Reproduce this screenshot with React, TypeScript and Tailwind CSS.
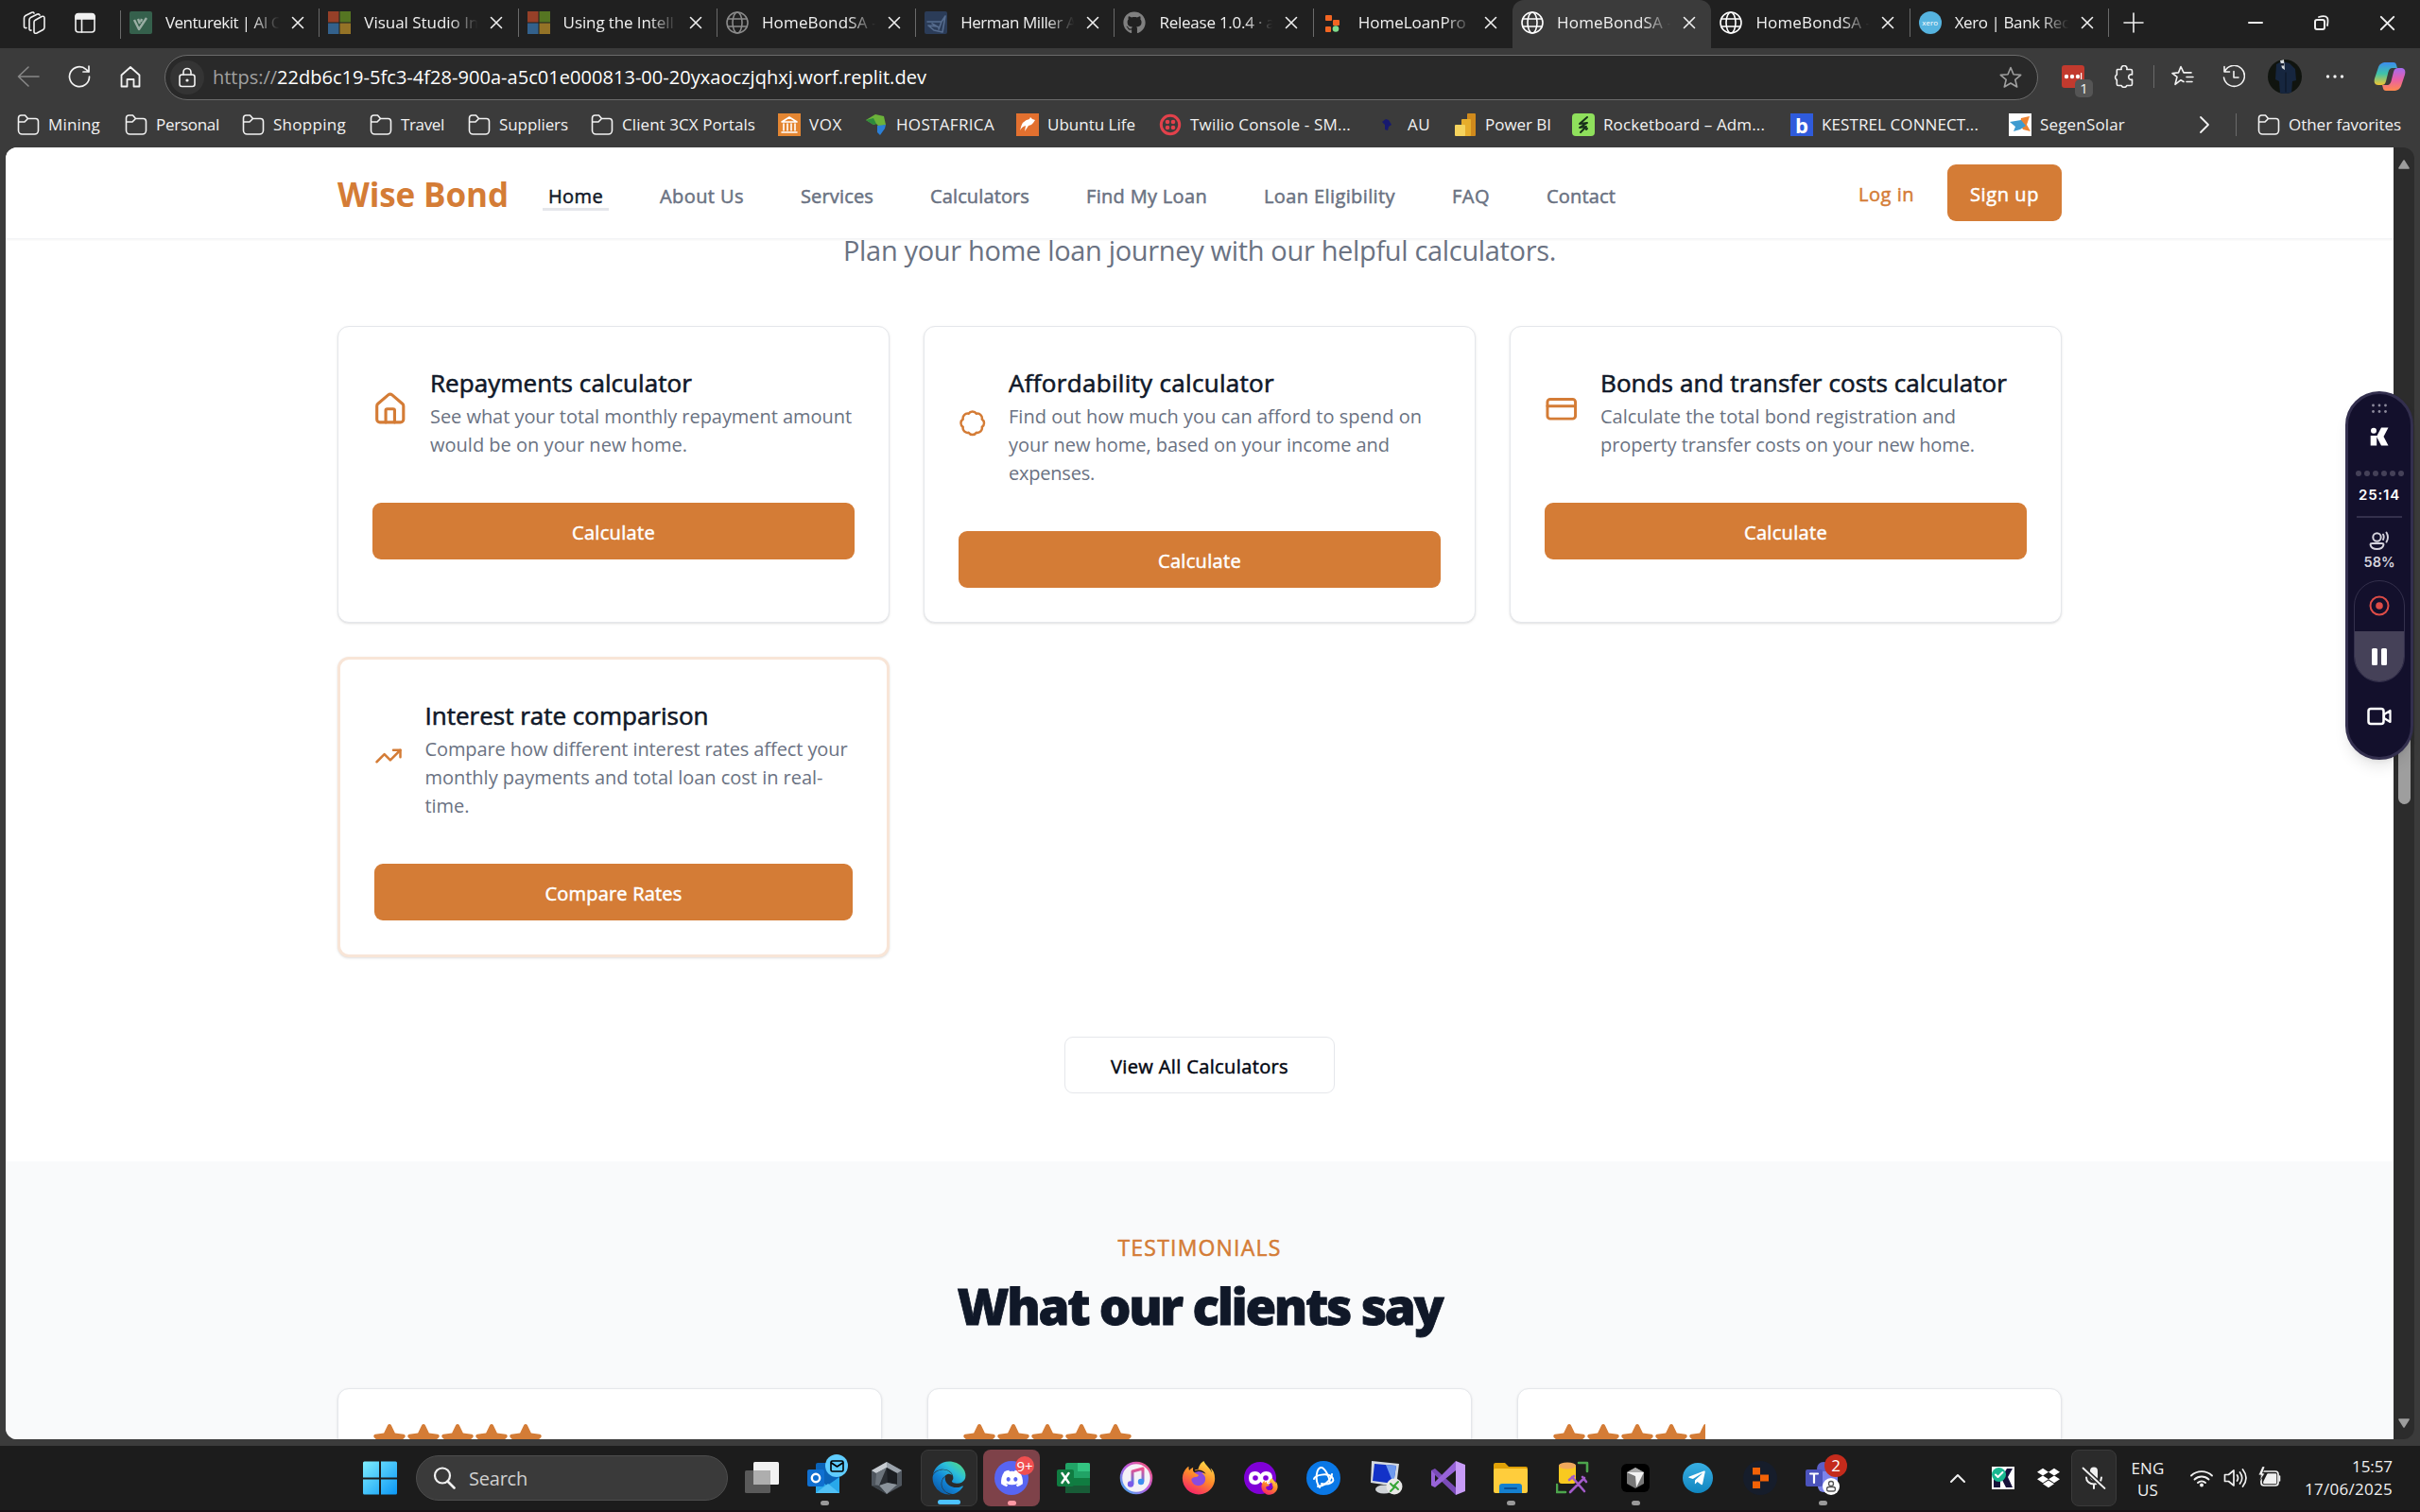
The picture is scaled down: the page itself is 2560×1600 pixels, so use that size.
import React, { useLayoutEffect, useRef, useState } from "react";
import { Badge, CreditCard, House, TrendingUp } from "lucide-react";
import { FaDiscord, FaDropbox, FaEdge, FaFirefoxBrowser, FaGithub, FaStar, FaStarHalf, FaTelegramPlane } from "react-icons/fa";

/** Single line of text tracked so that it spans exactly `w` pixels. */
function Fit({ w, children, className = "" }: { w: number; children: string; className?: string }) {
  const ref = useRef<HTMLSpanElement>(null);
  const [ls, setLs] = useState(0);
  useLayoutEffect(() => {
    const el = ref.current;
    if (!el) return;
    el.style.letterSpacing = "0px";
    const natural = el.getBoundingClientRect().width;
    setLs((w - natural) / children.length);
    el.style.letterSpacing = `${(w - natural) / children.length}px`;
  }, [w, children]);
  return (
    <span ref={ref} className={"inline-block whitespace-nowrap " + className} style={{ letterSpacing: `${ls}px` }}>
      {children}
    </span>
  );
}

type SvgProps = { size?: number; vb?: string; className?: string; children: React.ReactNode };
function Svg({ size = 24, vb = "0 0 24 24", className = "", children }: SvgProps) {
  return (
    <svg width={size} height={size} viewBox={vb} fill="none" stroke="currentColor" strokeWidth="1.6" strokeLinecap="round" strokeLinejoin="round" className={"shrink-0 " + className}>
      {children}
    </svg>
  );
}

/* ---------- browser chrome ---------- */

const Globe = ({ className = "" }) => (
  <Svg className={className}>
    <circle cx="12" cy="12" r="11" />
    <ellipse cx="12" cy="12" rx="5" ry="11" />
    <path d="M2 8h20M2 16h20" />
  </Svg>
);
const MsLogo = () => (
  <Svg>
    <g stroke="none">
      <path fill="#964028" d="M0 0h11.500v11.500H0z" />
      <path fill="#557522" d="M12.500 0H24v11.500H12.500z" />
      <path fill="#33618c" d="M0 12.500h11.500V24H0z" />
      <path fill="#947327" d="M12.500 12.500H24V24H12.500z" />
    </g>
  </Svg>
);

const tabs: { t: string; w: number; icon: React.ReactNode; active?: boolean; noSep?: boolean }[] = [
  {
    t: "Venturekit | AI C", w: 122,
    icon: <Svg><rect width="24" height="24" rx="2" fill="#35604c" stroke="none" /><path d="M5 9l5 10 8-12M9 8l2 5M13 8l-1 3" stroke="#9aaea4" strokeWidth="2.4" strokeLinecap="butt" /></Svg>,
  },
  { t: "Visual Studio In", w: 121, icon: <MsLogo /> },
  { t: "Using the Intell", w: 117, icon: <MsLogo /> },
  { t: "HomeBondSA -", w: 122, icon: <Globe className="text-[#8a8a8a]" /> },
  {
    t: "Herman Miller A", w: 122,
    icon: <Svg><rect width="24" height="24" rx="2" fill="#2b3c58" stroke="none" /><path d="M3 11h15l4-6-3 17-9-2-6-5 9 1M8 13l7 4M18 11l-3 8" stroke="#566c8e" /></Svg>,
  },
  { t: "Release 1.0.4 · a", w: 122, icon: <FaGithub className="size-6 shrink-0 text-[#808080]" /> },
  {
    t: "HomeLoanPro", w: 114,
    icon: <Svg><g stroke="none"><rect x="3" y="4" width="7" height="6" rx="1" fill="#f26522" /><rect x="11" y="9" width="7" height="6" rx="1" fill="#f26522" /><rect x="3" y="16" width="6" height="6" rx="1" fill="#f26522" /><circle cx="14" cy="18.500" r="3.300" fill="#7fdc8c" /></g></Svg>,
    noSep: true,
  },
  { t: "HomeBondSA -", w: 122, icon: <Globe className="text-white" />, active: true, noSep: true },
  { t: "HomeBondSA -", w: 122, icon: <Globe className="text-white" /> },
  {
    t: "Xero | Bank Rec", w: 121,
    icon: <span className="flex size-6 shrink-0 items-center justify-center rounded-full bg-[#56b4e0] text-[8px] text-white">xero</span>,
  },
];

function CloseX({ size = 14 }: { size?: number }) {
  return <Svg size={size} vb="0 0 14 14"><path d="M1.500 1.500l11 11M12.500 1.500l-11 11" /></Svg>;
}

function TabBar() {
  return (
    <div className="flex h-[51px] bg-[#202020] text-[17px] text-[#f0f0f0]">
      <div className="flex w-[127px] shrink-0 items-center gap-[30px] pl-6 pb-[3px]">
        <Svg>
          <path d="M12 11.500q0-1.500 1-2l7-4q3-1 3 1.500v10q0 1.500-1.500 2.500l-6.500 3.500q-3 1-3-1.500z" />
          <path d="M9 20q-2 .5-2-1.500V9q0-1.500 1.500-2.500l7-3.500q2-.5 2.500 1" />
          <path d="M4 17.500q-2.500.5-2.500-1.500V7q0-1.500 1.500-2.500l6.500-3.300q2-.7 2.500.8" />
        </Svg>
        <Svg><rect x="2" y="3" width="20" height="19" rx="3" /><path d="M2 5.500a3 3 0 0 1 3-3h14a3 3 0 0 1 3 3V8H2z" fill="currentColor" /><path d="M8.500 8v14" /></Svg>
      </div>
      <div className="h-[30px] w-px self-center bg-[#6a6a6a]" />
      <div className="flex items-center">
        {tabs.map((tab, i) => (
          <div
            key={i}
            className={
              "flex h-[51px] w-[210.300px] items-center pb-[3px] pl-[9px] " +
              (tab.active ? "rounded-t-xl bg-[#3b3b3b]" : "")
            }
          >
            {tab.icon}
            <div className="ml-[14px] w-[123px] overflow-hidden [mask-image:linear-gradient(to_right,#000_74%,transparent_98%)]">
              <Fit w={tab.w}>{tab.t}</Fit>
            </div>
            <div className="ml-[9px] flex w-4 justify-center"><CloseX /></div>
            {!tab.noSep && <div className="ml-auto h-[30px] w-px bg-[#6a6a6a]" />}
          </div>
        ))}
      </div>
      <div className="flex flex-1 items-center pb-[3px] pl-[13px] pr-[26px]">
        <Svg size={26} vb="0 0 26 26"><path d="M3 13h20M13 3v20" /></Svg>
        <div className="ml-auto flex items-center">
          <Svg size={16} vb="0 0 16 16"><path d="M1 8h14" strokeWidth="2" /></Svg>
          <Svg size={16} vb="0 0 16 16" className="ml-[54px]"><rect x="1" y="5" width="10" height="10" rx="2" strokeWidth="2" /><path d="M5 2q7-2 9 1 1 2 0 8" strokeWidth="1.800" /></Svg>
          <div className="ml-[53px]"><CloseX size={17} /></div>
        </div>
      </div>
    </div>
  );
}

function Toolbar() {
  return (
    <div className="flex h-[59px] items-center bg-[#3b3b3b] text-[#f2f2f2]">
      <div className="flex w-[174px] shrink-0 items-center gap-[30px] pl-[18px]">
        <Svg className="text-[#888]"><path d="M23 12H1.500M12 2L1.500 12 12 22" /></Svg>
        <Svg><path d="M22.500 12A10.500 10.500 0 1 1 19 4.300L22 7M22 1v6h-6" strokeWidth="1.700" /></Svg>
        <Svg><path d="M2.500 10.500L12 2l9.500 8.500V22.500h-6V15h-7v7.500h-6z" strokeWidth="1.800" /></Svg>
      </div>
      <div className="mt-[2px] flex h-12 w-[1982px] shrink-0 items-center rounded-full border-[1.500px] border-[#6b6b6b] bg-[#292929] pl-[5px] pr-4">
        <span className="flex size-9 items-center justify-center rounded-full bg-[#343434]">
          <Svg size={22} vb="0 0 22 22"><rect x="3" y="8" width="16" height="12.500" rx="2.500" /><path d="M7 8V5.500a4 4 0 0 1 8 0V8" /><circle cx="11" cy="14" r=".8" fill="currentColor" /></Svg>
        </span>
        <div className="ml-[9px] text-[20px] leading-none">
          <Fit w={68} className="text-[#a0a0a0]">https://</Fit>
          <Fit w={687} className="text-white">22db6c19-5fc3-4f28-900a-a5c01e000813-00-20yxaoczjqhxj.worf.replit.dev</Fit>
        </div>
        <Svg className="ml-auto text-[#a0a0a0]"><path d="M12 1.500l3 7.200 7.700.6-5.900 5 1.900 7.700L12 18l-6.700 4 1.900-7.700-5.900-5 7.700-.6z" /></Svg>
      </div>
      <div className="relative ml-[25px] flex h-6 w-6 items-center justify-center rounded-[3px] bg-[#c23a2e]">
        <Svg size={22} vb="0 0 22 22" className="text-white"><g fill="currentColor" stroke="none"><circle cx="4" cy="11" r="2.200" /><circle cx="10" cy="11" r="2.200" /><circle cx="16" cy="11" r="2.200" /><path d="M19 7h1.200v8H19z" /></g></Svg>
        <span className="absolute left-[14px] top-[15px] flex h-[19px] w-[19px] items-center justify-center rounded-[5px] bg-[#555] text-[15px]">1</span>
      </div>
      <Svg className="ml-[30px]"><path d="M5 4.500h4.200a3 3 0 1 1 5.600 0H19a1.500 1.500 0 0 1 1.500 1.500v4a2.800 2.800 0 1 0 0 5.200V20a1.500 1.500 0 0 1-1.500 1.500h-4.200a3 3 0 0 1-5.600 0H5.800A1.500 1.500 0 0 1 4.300 20v-4.500a3 3 0 0 1 0-5.400V6A1.500 1.500 0 0 1 5 4.500z" /></Svg>
      <div className="ml-[19px] h-6 w-px bg-[#6a6a6a]" />
      <Svg className="ml-[18px]"><path d="M13 17.500l-3-1.800-6 4.600 2-8L1 8.500l6.500-.6L10 1.500l3 6.400h8M16 12.500h7M16 17.500h6" /></Svg>
      <Svg className="ml-[30px]"><path d="M2.500 6.500A11 11 0 1 1 1.500 13M2 1.500v5.500h5.500M12 6.500v6.500h5" /></Svg>
      <span className="ml-6 flex size-9 shrink-0 overflow-hidden rounded-full">
        <Svg size={36} vb="0 0 36 36"><g stroke="none"><rect width="36" height="36" fill="#10140f" /><path d="M9 5l6-3 8 2 6 6 1 12-4 1-1 13H13l-1-13-4-2z" fill="#16263f" /><path d="M13 1l4-1 1 11-3-2z" fill="#d4d9dc" /><path d="M13.500 4h3.500v2.500h-3.500z" fill="#1b2233" /><path d="M19 14v20" stroke="#0a1220" strokeWidth="1" /></g></Svg>
      </span>
      <Svg size={20} vb="0 0 20 20" className="ml-[25px]"><g fill="currentColor" stroke="none"><circle cx="2.500" cy="10" r="1.700" /><circle cx="10" cy="10" r="1.700" /><circle cx="17.500" cy="10" r="1.700" /></g></Svg>
      <Svg size={34} vb="0 0 34 34" className="ml-[31px]">
        <g stroke="none">
          <path d="M13 2h8c3 0 3 3 4 6h-5c-3 0-4 2-5 6l-2 8c-1 3-2 4-5 4H5c-4 0-5-3-4-7l4-12c1-3 4-5 8-5z" fill="url(#cp1)" />
          <path d="M21 32h-8c-3 0-3-3-4-6h5c3 0 4-2 5-6l2-8c1-3 2-4 5-4h3c4 0 5 3 4 7l-4 12c-1 3-4 5-8 5z" fill="url(#cp2)" />
        </g>
      </Svg>
    </div>
  );
}

const Folder = () => (
  <Svg><path d="M1.500 5a3 3 0 0 1 3-3h4l3 3.500h8a3 3 0 0 1 3 3V18a4 4 0 0 1-4 4h-13a4 4 0 0 1-4-4zM1.500 9H8l3.500-3.500" /></Svg>
);
const f = <Folder />;
const bookmarks: { t: string; slot: number; w: number; icon: React.ReactNode }[] = [
  { t: "Mining", slot: 114, w: 55, icon: f },
  { t: "Personal", slot: 124, w: 67, icon: f },
  { t: "Shopping", slot: 135, w: 77, icon: f },
  { t: "Travel", slot: 104, w: 46, icon: f },
  { t: "Suppliers", slot: 130, w: 73, icon: f },
  { t: "Client 3CX Portals", slot: 198, w: 141, icon: f },
  { t: "VOX", slot: 92, w: 35, icon: <Svg><rect width="24" height="24" fill="#e48632" stroke="none" /><path d="M4 9l8-5 8 5zM6 11v7M10 11v7M14 11v7M18 11v7M4 20h16" stroke="#fff" /></Svg> },
  { t: "HOSTAFRICA", slot: 160, w: 104, icon: <Svg><g stroke="none"><path d="M1 7L11 1l9 2 2 9-7 2-3-3-3 1z" fill="#6cb33a" /><path d="M13 13l9-1-1 4-5 7-3-3z" fill="#2b7fd6" /><path d="M1 7l8-2 3 6-3 1z" fill="#2f8a3c" /></g></Svg> },
  { t: "Ubuntu Life", slot: 151, w: 93, icon: <Svg><rect width="24" height="24" fill="#e2702f" stroke="none" /><path d="M4 18q2-11 10-12l1-2 2 2 3 1-2 3q-2 3-5 3l-4 6 1-6q-4 1-6 5z" fill="#fff" stroke="none" /></Svg> },
  { t: "Twilio Console - SM...", slot: 230, w: 170, icon: <Svg><circle cx="12" cy="12" r="9.700" stroke="#e2414b" strokeWidth="3" /><g fill="#e2414b" stroke="none"><circle cx="9" cy="9" r="2.300" /><circle cx="15" cy="9" r="2.300" /><circle cx="9" cy="15" r="2.300" /><circle cx="15" cy="15" r="2.300" /></g></Svg> },
  { t: "AU", slot: 82, w: 24, icon: <Svg><path d="M6 9l4-3 3 1 3 5-3 2-1 4-3-1 0-5z" fill="#17196f" stroke="none" /></Svg> },
  { t: "Power BI", slot: 125, w: 70, icon: <Svg><g stroke="none"><rect x="14" y="0" width="9" height="24" rx="1" fill="#d08a1c" /><rect x="8" y="6" width="10" height="18" rx="1" fill="#e6ad2c" /><rect x="1" y="12" width="11" height="12" rx="1" fill="#f5d35d" /></g></Svg> },
  { t: "Rocketboard – Adm...", slot: 231, w: 171, icon: <Svg><rect width="24" height="24" rx="4" fill="#8fe05c" stroke="none" /><path d="M16 4L8 11l8-1-8 5 7-1-6 6M15 17l1-1" stroke="#17301a" strokeWidth="2" /></Svg> },
  { t: "KESTREL CONNECT...", slot: 231, w: 166, icon: <span className="flex size-6 shrink-0 items-center justify-center bg-[#2f5bdc] text-[22px] font-bold leading-none text-white">b</span> },
  { t: "SegenSolar", slot: 200, w: 90, icon: <Svg><g stroke="none"><rect width="24" height="24" fill="#fff" /><path d="M13 5l9-2-3 9 4 7-8-2-3-6z" fill="#ee8331" /><path d="M1 9l12-2 5 6-6 4-7 2 2-5z" fill="#3e9bd0" /></g></Svg> },
];

function BookmarkBar() {
  return (
    <div className="flex h-[46px] items-center bg-[#3b3b3b] pb-0.5 pl-[18px] text-[17px] text-[#f2f2f2]">
      {bookmarks.map((b) => (
        <div key={b.t} className="flex shrink-0 items-center gap-[9px]" style={{ width: b.slot }}>
          {b.icon}
          <Fit w={b.w}>{b.t}</Fit>
        </div>
      ))}
      <Svg size={20} vb="0 0 20 20"><path d="M3 2l8 8-8 8" strokeWidth="1.800" /></Svg>
      <div className="ml-[20px] h-6 w-px bg-[#6a6a6a]" />
      <div className="ml-[22px] flex items-center gap-[9px]">
        <Folder />
        <Fit w={119}>Other favorites</Fit>
      </div>
    </div>
  );
}

/* ---------- web page ---------- */

const navLinks: [string, number][] = [
  ["Home", 58], ["About Us", 89], ["Services", 77], ["Calculators", 105],
  ["Find My Loan", 128], ["Loan Eligibility", 139], ["FAQ", 40], ["Contact", 73],
];

function SiteHeader() {
  return (
    <header className="relative z-10 flex h-[97px] items-center border-b border-gray-100 bg-white px-[351px] shadow-xs">
      <Fit w={181} className="pt-[3px] text-[35px] font-bold leading-[48px] text-[#d47c36]">Wise Bond</Fit>
      <nav className="ml-[36px] flex gap-12 pt-[3px]">
        {navLinks.map(([t, w], i) => (
          <a
            key={t}
            className={
              "border-b-[3px] px-1.5 pt-[6px] text-[20px] leading-[25px] [-webkit-text-stroke:0.5px] " +
              (i === 0 ? "border-gray-200 text-gray-900" : "border-transparent text-gray-500")
            }
          >
            <Fit w={w}>{t}</Fit>
          </a>
        ))}
      </nav>
      <Fit w={59} className="ml-auto pt-[3px] text-[20px] text-[#d47c36] [-webkit-text-stroke:0.5px]">Log in</Fit>
      <button className="ml-[35px] flex h-[60px] w-[121px] items-center justify-center rounded-[9px] bg-[#d47c36] pt-[3px] text-[20px] text-white [-webkit-text-stroke:0.5px]">
        <Fit w={73}>Sign up</Fit>
      </button>
    </header>
  );
}

type Calc = { title: string; tw: number; lines: [string, number][]; cta: string; cw: number; icon: React.ReactNode; featured?: boolean };
const calcs: Calc[] = [
  {
    title: "Repayments calculator", tw: 277, cta: "Calculate", cw: 88,
    lines: [["See what your total monthly repayment amount", 446], ["would be on your new home.", 272]],
    icon: <House className="mb-[2px] h-[37.500px] w-[37.500px] shrink-0" />,
  },
  {
    title: "Affordability calculator", tw: 281, cta: "Calculate", cw: 88,
    lines: [["Find out how much you can afford to spend on", 437], ["your new home, based on your income and", 403], ["expenses.", 91]],
    icon: <Badge className="mb-[2px] h-[29.500px] w-[29.500px] shrink-0" />,
  },
  {
    title: "Bonds and transfer costs calculator", tw: 430, cta: "Calculate", cw: 88,
    lines: [["Calculate the total bond registration and", 376], ["property transfer costs on your new home.", 396]],
    icon: <CreditCard className="mb-[2px] h-[35.500px] w-[35.500px] shrink-0" />,
  },
  {
    title: "Interest rate comparison", tw: 300, cta: "Compare Rates", cw: 145, featured: true,
    lines: [["Compare how different interest rates affect your", 447], ["monthly payments and total loan cost in real-", 421], ["time.", 47]],
    icon: <TrendingUp className="mb-[2px] h-[30px] w-[30px] shrink-0" />,
  },
];

function CalcCard({ c }: { c: Calc }) {
  return (
    <div className={"rounded-xl bg-white p-9 shadow-sm " + (c.featured ? "border-[3px] border-[#f8e5d7]" : "border border-gray-200")}>
      <div className="flex items-center gap-[23.500px] text-[#d47c36]">
        {c.icon}
        <div>
          <h3 className="h-[43px] text-[26px] leading-[46px] text-gray-900 [-webkit-text-stroke:0.6px]"><Fit w={c.tw}>{c.title}</Fit></h3>
          {c.lines.map(([t, w]) => (
            <p key={t} className="h-[30px] text-[20px] leading-[32px] text-gray-500"><Fit w={w}>{t}</Fit></p>
          ))}
        </div>
      </div>
      <button className="mt-[47px] flex h-[60px] w-full items-center justify-center rounded-[9px] bg-[#d47c36] pt-[3px] text-[20px] text-white [-webkit-text-stroke:0.5px]">
        <Fit w={c.cw}>{c.cta}</Fit>
      </button>
    </div>
  );
}

function Stars({ half = false }) {
  return (
    <div className="flex text-[#d47c36]">
      {[0, 1, 2, 3].map((i) => <FaStar key={i} className="h-8 w-9" />)}
      {half ? <FaStarHalf className="h-8 w-9" /> : <FaStar className="h-8 w-9" />}
    </div>
  );
}

function SitePage() {
  return (
    <div className="h-[1367px] w-[2526px] overflow-hidden rounded-tl-xl rounded-bl-xl bg-white">
      <SiteHeader />
      <section className="flex flex-col items-center px-[351px] pb-[72px]">
        <Fit w={754} className="-mt-[9px] text-[29px] leading-[42px] text-gray-500">Plan your home loan journey with our helpful calculators.</Fit>
        <div className="mt-[59px] grid w-full grid-cols-3 gap-9">
          {calcs.map((c) => <CalcCard key={c.title} c={c} />)}
        </div>
        <button className="mt-[84px] flex h-[60px] w-[286px] items-center justify-center rounded-[9px] border border-gray-200 pt-[3px] text-[20px] text-gray-950 [-webkit-text-stroke:0.5px]">
          <Fit w={188}>View All Calculators</Fit>
        </button>
      </section>
      <section className="flex flex-col items-center bg-gray-50 px-[351px] pb-20 pt-[73px]">
        <Fit w={173} className="text-[23px] leading-[36px] text-[#d47c36] [-webkit-text-stroke:0.5px]">TESTIMONIALS</Fit>
        <h2 className="mt-[14px] text-[53px] font-extrabold leading-[60px] text-gray-900 [-webkit-text-stroke:0.8px]"><Fit w={513}>What our clients say</Fit></h2>
        <div className="mt-[57px] grid w-full grid-cols-3 gap-12">
          {[false, false, true].map((half, i) => (
            <div key={i} className="h-[300px] rounded-xl border border-gray-200 bg-white px-9 pt-[37px] shadow-sm"><Stars half={half} /></div>
          ))}
        </div>
      </section>
    </div>
  );
}

function Scrollbar() {
  return (
    <div className="flex w-[22px] flex-col items-center rounded-r-xl bg-[#2c2c2c]">
      <Svg size={14} vb="0 0 14 14" className="mt-[11px]"><path d="M2 11l5-8 5 8z" fill="#9e9e9e" stroke="#9e9e9e" /></Svg>
      <div className="mt-[579px] h-[91px] w-[13px] rounded-full bg-[#9e9e9e]" />
      <Svg size={14} vb="0 0 14 14" className="mb-[10px] mt-auto"><path d="M2 3l5 8 5-8z" fill="#9e9e9e" stroke="#9e9e9e" /></Svg>
    </div>
  );
}

/* ---------- floating recorder ---------- */

function Recorder() {
  return (
    <div className="absolute left-[2481px] top-[414px] flex h-[390px] w-[72px] flex-col items-center rounded-full border-[3px] border-[#332f4e] bg-[#13102c] font-['Inter',sans-serif] text-white shadow-lg">
      <Svg size={20} vb="0 0 20 20" className="mt-[6px]">
        <g fill="#8b899b" stroke="none">
          <circle cx="3.500" cy="6" r="1.400" /><circle cx="10" cy="6" r="1.400" /><circle cx="16.500" cy="6" r="1.400" />
          <circle cx="3.500" cy="12.500" r="1.400" /><circle cx="10" cy="12.500" r="1.400" /><circle cx="16.500" cy="12.500" r="1.400" />
        </g>
      </Svg>
      <Svg size={20} vb="0 0 20 20" className="mt-[9px]"><g fill="#fff" stroke="none"><circle cx="4" cy="3.800" r="3" /><path d="M.7 9h6.500v10.500H.7zM12 .5h7.500L14.500 10l5 9.500H12L7 10z" /></g></Svg>
      <div className="mt-[26px] flex gap-[3px]">
        {[0, 1, 2, 3, 4, 5].map((i) => <span key={i} className="size-1.5 rounded-full bg-[#454158]" />)}
      </div>
      <Fit w={44} className="mt-[11px] text-[15px] font-semibold leading-[18px]">25:14</Fit>
      <div className="mt-[12.500px] h-[2px] w-12 bg-[#34304c]" />
      <Svg size={22} vb="0 0 22 22" className="mt-[13px] text-[#d5d3dd]"><circle cx="8.500" cy="7.500" r="4.200" strokeWidth="2" /><path d="M1.500 15.500q0-1.500 2-1.500h10q2 0 2 1.500-1 4.500-7 4.500t-7-4.500zM15 4.500q1.500 2.500 0 5.500M18.500 2.500q3 5 0 10" strokeWidth="1.900" /></Svg>
      <Fit w={33} className="mt-[3px] text-[14.500px] font-semibold leading-[18px] text-[#d5d3dd]">58%</Fit>
      <div className="mt-[10px] h-[108px] w-[54px] overflow-hidden rounded-full border border-[#34304c]">
        <div className="flex h-[53px] items-center justify-center text-[#dd4c47]">
          <Svg size={22} vb="0 0 22 22"><circle cx="11" cy="11" r="9.500" strokeWidth="2" /><circle cx="11" cy="11" r="3.800" fill="currentColor" stroke="none" /></Svg>
        </div>
        <div className="flex h-[55px] items-center justify-center gap-1 bg-[#454158]">
          <span className="h-[18px] w-1.5 rounded-[1.500px] bg-white" /><span className="h-[18px] w-1.5 rounded-[1.500px] bg-white" />
        </div>
      </div>
      <Svg size={26} vb="0 0 26 26" className="mt-[23px]"><rect x="1.500" y="5" width="16" height="16" rx="2.500" strokeWidth="2.500" /><path d="M18 11l6.500-4v12L18 15z" strokeWidth="2.200" /></Svg>
    </div>
  );
}

/* ---------- taskbar ---------- */

function Cell({ children, dot, className = "" }: { children: React.ReactNode; dot?: string; className?: string }) {
  return (
    <div className={"relative flex h-[60px] w-[60px] shrink-0 items-center justify-center rounded-lg " + className}>
      {children}
      {dot && <span className={"absolute bottom-[1px] h-[5px] rounded-full " + dot} />}
    </div>
  );
}
const grayDot = "w-[9px] bg-[#9a9a9a]";
const T = ({ children }: { children: React.ReactNode }) => <Svg size={36} vb="0 0 36 36"><g stroke="none">{children}</g></Svg>;

function TaskIcons() {
  return (
    <>
      <Cell><T><rect x="0" y="10" width="27" height="24" rx="1.500" fill="#5a5a5a" /><rect x="9" y="1" width="27" height="24" rx="1.500" fill="#f2f2f2" /><rect x="9" y="10" width="18" height="15" fill="#aeaeae" /></T></Cell>
      <Cell dot={grayDot}>
        <T><rect x="9" y="2" width="25" height="32" rx="2" fill="#0a63b8" /><path d="M9 18l12 8 13-9v17H9z" fill="#28a8ea" /><path d="M9 34l13-10 12 10z" fill="#50c0f5" /><rect x="0" y="9" width="18" height="18" rx="2" fill="#0f6fd0" /><circle cx="9" cy="18" r="4.200" fill="none" stroke="#fff" strokeWidth="2.400" /></T>
        <span className="absolute left-[31px] top-[5px] flex size-6 items-center justify-center rounded-full bg-[#60cdff] text-black"><Svg size={15} vb="0 0 15 15"><rect x="1" y="2" width="13" height="11" rx="1.500" /><path d="M1.500 4L7.500 8l6-4" /></Svg></span>
      </Cell>
      <Cell><T><path d="M18 1l16 9v16l-16 9-16-9V10z" fill="#4f565e" /><path d="M18 1l16 9-5 3-11-6z" fill="#9ca4ac" /><path d="M18 1v6L7 13l-5-3z" fill="#c7ccd1" /><path d="M18 7l11 6v12l-11-2z" fill="#1b1e22" /><path d="M18 7L7 13l-1 12 4 1z" fill="#6b737b" /><path d="M18 7l-8 19 9-3z" fill="#2a2e33" /><path d="M10 26l9-3 10 2-11 10z" fill="#8b939b" /><path d="M2 26l8 0 8 9z" fill="#3c4248" /></T></Cell>
      <Cell className="border border-[#3a3a3a] bg-[#2b2b2b]" dot="w-6 bg-[#4cc2ff]"><FaEdge className="size-9" fill="url(#edge)" /></Cell>
      <Cell className="bg-[#7e4249]" dot="w-[9px] bg-[#ff99a4]">
        <span className="flex size-9 items-center justify-center rounded-full bg-[#5865f2]"><FaDiscord className="size-[25px] text-white" /></span>
        <span className="absolute left-[34px] top-[7px] flex size-5 items-center justify-center rounded-full bg-[#f04f50] text-[15px] text-white"><Fit w={17}>9+</Fit></span>
      </Cell>
      <Cell><T><rect x="9" y="2" width="26" height="32" rx="2" fill="#21a366" /><path d="M22 2h11a2 2 0 0 1 2 2v7H22z" fill="#33c481" /><path d="M9 18h26v14a2 2 0 0 1-2 2H11a2 2 0 0 1-2-2z" fill="#107c41" /><path d="M9 26h26v6a2 2 0 0 1-2 2H11a2 2 0 0 1-2-2z" fill="#185c37" /><rect x="0" y="9" width="18" height="18" rx="2" fill="#107c41" /><path d="M5.500 13l7 10M12.500 13l-7 10" stroke="#fff" strokeWidth="2.400" /></T></Cell>
      <Cell><T><circle cx="18" cy="18" r="16" fill="#f4f2f7" stroke="url(#tunes)" strokeWidth="2.500" /><path d="M14 24V11l11-3v13" fill="none" stroke="url(#note)" strokeWidth="3" /><circle cx="12" cy="24.500" r="3.200" fill="#7a5be8" /><circle cx="23" cy="22" r="3.200" fill="#3c8ff0" /></T></Cell>
      <Cell><span className="relative flex"><span className="absolute left-[9px] top-[11px] size-[18px] rounded-full bg-[#8a4be0]" /><FaFirefoxBrowser className="relative size-9" fill="url(#fox)" /></span></Cell>
      <Cell>
        <T><circle cx="17" cy="18" r="17" fill="#8000d7" /><path d="M5 18q0-7 6.500-7 4 0 6 3 2-3 6-3 6.500 0 6.500 7t-6.500 7q-4 0-6-3-2 3-6 3Q5 25 5 18z" fill="#fff" /><circle cx="12" cy="18" r="2.800" fill="#8000d7" /><circle cx="23" cy="18" r="2.800" fill="#8000d7" /></T>
        <FaFirefoxBrowser className="absolute left-[30px] top-[30px] size-[18px]" fill="url(#fox)" />
      </Cell>
      <Cell><T><circle cx="18" cy="18" r="18" fill="#0a78e6" /><g fill="none" stroke="#fff" strokeWidth="2"><path d="M14 28C8 20 11 8 15 7s9 9 10 16" /><path d="M8 19c1-4 14-7 19-2s-4 9-11 7" /><path d="M27 14c-1 7-9 13-15 13" /></g></T></Cell>
      <Cell><T><path d="M3 0l29 3-3 24-27-4z" fill="#d5dae0" /><path d="M6 3l23 2-3 19-22-3z" fill="#1232c8" /><path d="M18 4l11 1-3 19z" fill="#6f9bf0" /><ellipse cx="16" cy="30" rx="9" ry="4.500" fill="#cfd3d7" /><circle cx="27" cy="27" r="8.500" fill="#e8e8e6" /><path d="M23 24l4 4-4 4M31 22l-4 4 4 4" fill="none" stroke="#36a536" strokeWidth="2" /></T></Cell>
      <Cell><T><path d="M26 0l10 4v28l-10 4z" fill="#c79bf7" /><path d="M0 10l4-2L26 28v8L3 14v10l-3 2z" fill="#7a4bb8" /><path d="M0 26V10l4 4v14zM26 0v10L4 28l-4-2z" fill="#9763d8" /></T></Cell>
      <Cell dot={grayDot}><T><path d="M0 4a2 2 0 0 1 2-2h10l4 4h18a2 2 0 0 1 2 2v6H0z" fill="#e0a107" /><rect x="0" y="8" width="36" height="26" rx="2" fill="#ffcd3c" /><path d="M6 34v-7a3 3 0 0 1 3-3h18a3 3 0 0 1 3 3v7z" fill="#1580d0" /><rect x="11" y="28" width="14" height="2" rx="1" fill="#0b4f94" /></T></Cell>
      <Cell><T><rect x="3" y="3" width="18" height="21" rx="3" fill="#f9c920" /><ellipse cx="12" cy="5" rx="9" ry="3.500" fill="#f0a85c" /><path d="M24 2h9v9M1 25v8h9" fill="none" stroke="#4ca54c" strokeWidth="2.600" /><path d="M15 33l15-15M17 17l13 15M14 20l5-4M28 17l4 5" stroke="#a25bc9" strokeWidth="2.600" fill="none" /></T></Cell>
      <Cell dot={grayDot}><T><rect x="3" y="3" width="30" height="30" rx="6" fill="#000" /><path d="M18 7l9 5v12l-9 5-9-5V12z" fill="#777" /><path d="M9 12l9-5 9 5-9 4z" fill="#aaa" /><path d="M9 12l18 0-8 16-1-12z" fill="#f2f2f2" /></T></Cell>
      <Cell><span className="flex size-8 items-center justify-center rounded-full bg-linear-to-b from-[#37aee2] to-[#0f86c0]"><FaTelegramPlane className="mr-0.5 size-[20px] text-white" /></span></Cell>
      <Cell><T><circle cx="18" cy="18" r="18" fill="#161d2b" /><path d="M10 7h8v7.500h-8zM18 14.500h9v7h-9zM10 21.500h8V29h-8z" fill="#f26207" /></T></Cell>
      <Cell dot={grayDot}>
        <T><circle cx="19" cy="8" r="7" fill="#5b5fc7" /><rect x="13" y="11" width="21" height="22" rx="6" fill="#7b83eb" /><rect x="0" y="9" width="18" height="18" rx="2" fill="#4b53bc" /><path d="M5 13.500h8M9 13.500v9.500" stroke="#fff" strokeWidth="2.200" /><circle cx="27" cy="27" r="9" fill="#fff" /><circle cx="27" cy="24" r="2.500" fill="none" stroke="#555" strokeWidth="1.300" /><rect x="22.500" y="27.500" width="9" height="4.500" rx="2.200" fill="none" stroke="#555" strokeWidth="1.300" /></T>
        <span className="absolute left-[32px] top-[5px] flex size-6 items-center justify-center rounded-full bg-[#c42b1c] text-[17px] text-white">2</span>
      </Cell>
    </>
  );
}

function Taskbar() {
  return (
    <div className="flex h-[70px] items-center border-b-2 border-[#1a1114] bg-[#1c1c1c] pl-[384px] text-[#f0f0f0]">
      <Svg size={36} vb="0 0 36 36"><g stroke="none" fill="url(#win)"><path d="M0 2a1.500 1.500 0 0 1 1.500-1.500H17v17H0zM19 .5h15.500A1.500 1.500 0 0 1 36 2v15.500H19zM0 19.500h17v16H1.500A1.500 1.500 0 0 1 0 34zM19 19.500h17V34a1.500 1.500 0 0 1-1.500 1.500H19z" /></g></Svg>
      <div className="ml-5 flex h-12 w-[330px] shrink-0 items-center rounded-full border border-[#4d4d4d] bg-[#3a3a3a] pl-[17px]">
        <Svg size={24}><circle cx="10" cy="9.500" r="8" strokeWidth="2.200" /><path d="M15.500 15.500l7 7" strokeWidth="2.600" /></Svg>
        <Fit w={62} className="ml-[14px] pt-px text-[20px] text-[#d0d0d0]">Search</Fit>
      </div>
      <div className="ml-1.5 flex items-center gap-1.5"><TaskIcons /></div>
      <Svg size={18} vb="0 0 18 18" className="ml-[104px]"><path d="M2 13l7-7 7 7" strokeWidth="2" /></Svg>
      <Svg className="ml-[27px]"><g stroke="none"><rect width="24" height="24" fill="#fff" /><path d="M2 13h7v9H2zM16 2h6l-5 9 5 11h-7l-5-10z" fill="#16123a" /><circle cx="7.500" cy="8.500" r="7.500" fill="#17b890" /></g><path d="M4 8.500l2.500 2.500 5-5" stroke="#fff" strokeWidth="2" /></Svg>
      <FaDropbox className="ml-[24px] h-6 w-6 shrink-0 text-white" />
      <div className="ml-3 flex h-[60px] w-12 shrink-0 items-center justify-center rounded-lg border border-[#3a3a3a] bg-[#2b2b2b]">
        <Svg size={26} vb="0 0 26 26"><rect x="9" y="1.500" width="8" height="14" rx="4" fill="currentColor" stroke="none" /><path d="M5 12.500a8 7 0 0 0 16 0M13 20v4" strokeWidth="2" /><path d="M1.500 2.500l23 21.500" stroke="#2b2b2b" strokeWidth="5" /><path d="M1.500 2.500l23 21.500" strokeWidth="1.800" /></Svg>
      </div>
      <div className="ml-[15px] flex w-[36px] flex-col items-center pt-px text-[17px] leading-[23px]"><Fit w={35}>ENG</Fit><Fit w={22}>US</Fit></div>
      <Svg size={26} vb="0 0 26 26" className="ml-[26px]"><path d="M2 10.500a16 16 0 0 1 22 0M5.500 14.500a11 11 0 0 1 15 0M9 18a6 6 0 0 1 8 0" strokeWidth="1.900" /><circle cx="13" cy="20.500" r="2" fill="currentColor" stroke="none" /></Svg>
      <Svg size={26} vb="0 0 26 26" className="ml-[10px]"><path d="M1.500 9.500h4L11 5v16l-5.500-4.500h-4zM14.500 10q2 3 0 6M17.500 7q4.500 6 0 12M20.500 4q7 9 0 18" strokeWidth="1.700" /></Svg>
      <Svg size={26} vb="0 0 26 26" className="ml-[10px]"><rect x="4" y="6" width="18" height="15" rx="3" strokeWidth="1.700" /><path d="M7 18.500V17l4-8h8.500v9.500zM23.500 11v5" fill="currentColor" /><path d="M5 1L1 10h3L2 17l6-9H5.500L8 1z" fill="currentColor" stroke="#1c1c1c" strokeWidth=".8" /></Svg>
      <div className="ml-auto mr-[29px] flex flex-col items-end text-[17px] leading-[24px]"><Fit w={43}>15:57</Fit><Fit w={93}>17/06/2025</Fit></div>
    </div>
  );
}

function Gradients() {
  return (
    <svg className="absolute h-0 w-0">
      <defs>
        <linearGradient id="win" gradientUnits="userSpaceOnUse" x1="0" y1="0" x2="36" y2="36"><stop offset="0" stopColor="#7fefff" /><stop offset="1" stopColor="#0a96f5" /></linearGradient>
        <linearGradient id="cp1" x1="0" y1="0" x2="0" y2="1"><stop offset="0" stopColor="#3b8cf0" /><stop offset=".5" stopColor="#3fc4a8" /><stop offset="1" stopColor="#f2c530" /></linearGradient>
        <linearGradient id="cp2" x1="0" y1="0" x2="0" y2="1"><stop offset="0" stopColor="#a56bf0" /><stop offset=".5" stopColor="#e85fa8" /><stop offset="1" stopColor="#ff8a4c" /></linearGradient>
        <linearGradient id="edge" x1="1" y1="0" x2=".2" y2="1"><stop offset="0" stopColor="#5fe06a" /><stop offset=".35" stopColor="#2cc0d8" /><stop offset=".65" stopColor="#1286d8" /><stop offset="1" stopColor="#0c59a4" /></linearGradient>
        <linearGradient id="fox" x1=".8" y1="0" x2=".3" y2="1"><stop offset="0" stopColor="#ffe14a" /><stop offset=".5" stopColor="#ff8a2a" /><stop offset="1" stopColor="#f5216a" /></linearGradient>
        <linearGradient id="tunes" x1="1" y1="0" x2="0" y2="1"><stop offset="0" stopColor="#f8546c" /><stop offset=".5" stopColor="#b85be0" /><stop offset="1" stopColor="#38b6f5" /></linearGradient>
        <linearGradient id="note" x1="0" y1="0" x2="0" y2="1"><stop offset="0" stopColor="#f0508c" /><stop offset="1" stopColor="#4c7cf0" /></linearGradient>
      </defs>
    </svg>
  );
}

export default function App() {
  return (
    <div className="relative flex h-[1600px] w-[2560px] flex-col overflow-hidden bg-[#3b3b3b] font-['Open_Sans','Noto_Sans',sans-serif]">
      <Gradients />
      <TabBar />
      <Toolbar />
      <BookmarkBar />
      <div className="flex h-[1374px] pb-[7px] pl-1.5">
        <SitePage />
        <Scrollbar />
      </div>
      <Taskbar />
      <Recorder />
    </div>
  );
}
